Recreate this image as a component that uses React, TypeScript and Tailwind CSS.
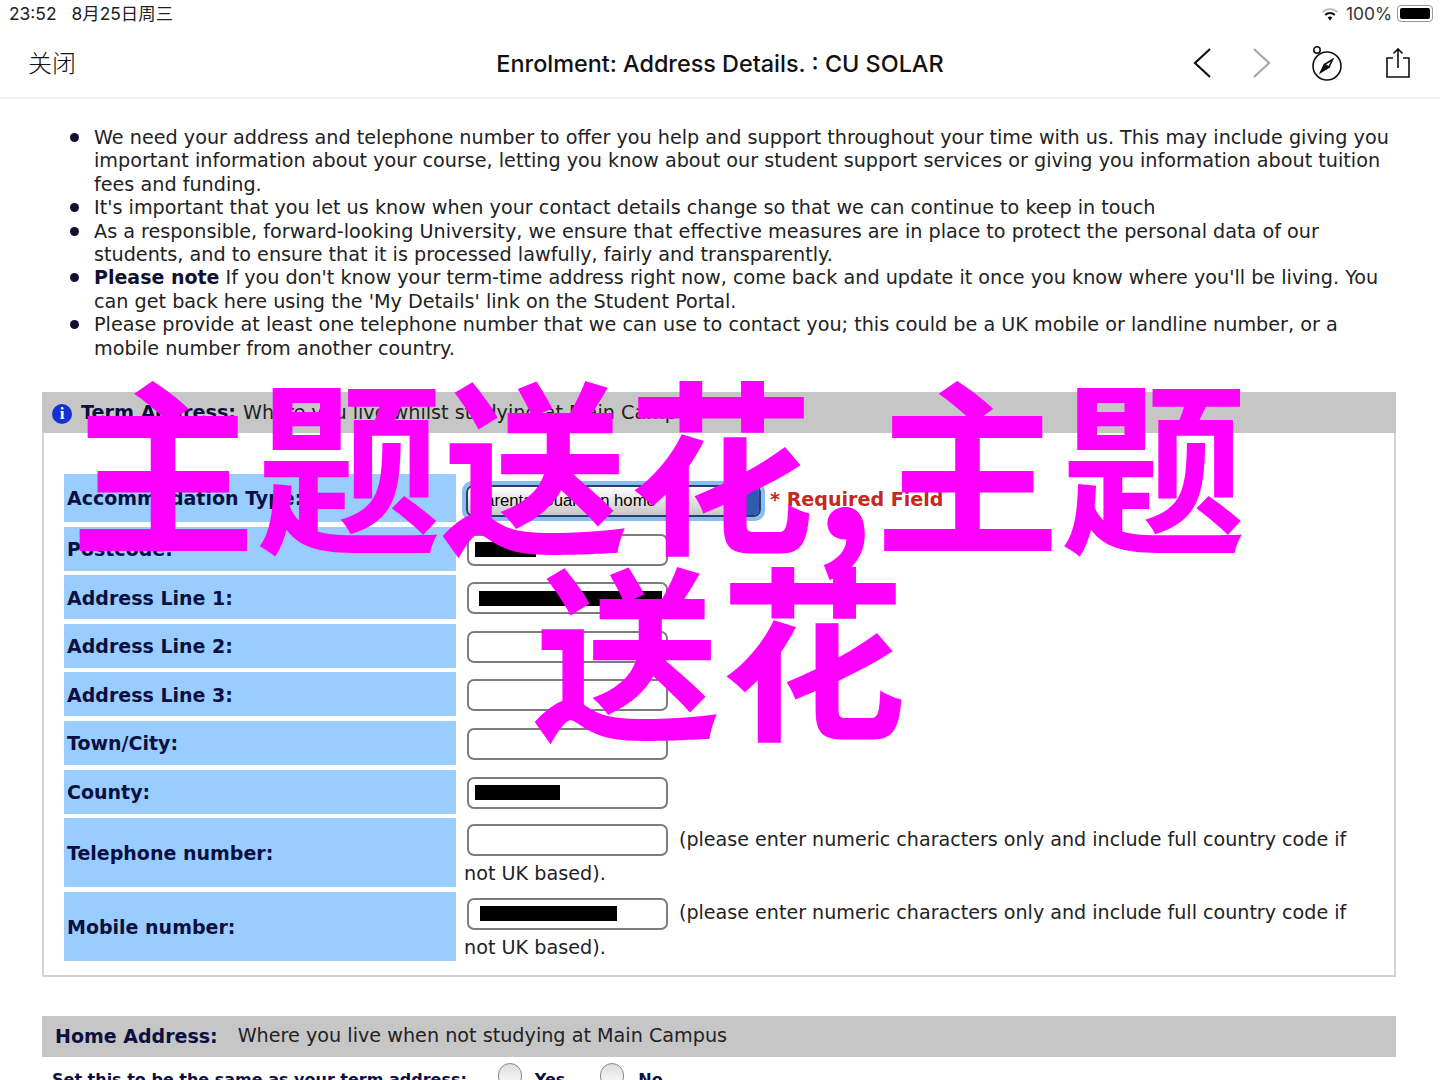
const bullets = [
  <>We need your address and telephone number to offer you help and support throughout your time with us. This may include giving you important information about your course, letting you know about our student support services or giving you information about tuition fees and funding.</>,
  <>It's important that you let us know when your contact details change so that we can continue to keep in touch</>,
  <>As a responsible, forward-looking University, we ensure that effective measures are in place to protect the personal data of our students, and to ensure that it is processed lawfully, fairly and transparently.</>,
  <><b className="text-[19px] text-[#101030]">Please note</b> If you don't know your term-time address right now, come back and update it once you know where you'll be living. You can get back here using the 'My Details' link on the Student Portal.</>,
  <>Please provide at least one telephone number that we can use to contact you; this could be a UK mobile or landline number, or a mobile number from another country.</>,
];

function NavIcons() {
  return (
    <div className="flex items-center pr-[29px]">
      <svg width="24" height="34" viewBox="0 0 24 34" fill="none" stroke="#111" strokeWidth="2.2">
        <path d="M19 3 4 17l15 14" />
      </svg>
      <svg className="ml-[34px]" width="24" height="34" viewBox="0 0 24 34" fill="none" stroke="#a8a8a8" strokeWidth="2.2">
        <path d="M5 3l15 14L5 31" />
      </svg>
      <svg className="ml-[36px]" width="34" height="36" viewBox="0 0 34 36" fill="none" stroke="#111" strokeWidth="1.6">
        <circle cx="18" cy="21" r="14" />
        <circle cx="8" cy="5" r="3.2" />
        <path d="M23.5 14.5 15.5 19.5 12 27l8-5z" />
        <path d="M15.5 19.5 20 22 12 27z" fill="#111" />
      </svg>
      <svg className="ml-[42px]" width="26" height="32" viewBox="0 0 26 32" fill="none" stroke="#111" strokeWidth="1.6">
        <path d="M8 11H2v19h22V11h-6" />
        <path d="M13 21V2M8.5 6.5 13 2l4.5 4.5" />
      </svg>
    </div>
  );
}

function Field({ mark }: { mark?: string }) {
  return (
    <div className="flex h-[32px] w-[201px] shrink-0 items-center rounded-[7px] border-2 border-[#7d7d7d] bg-white">
      {mark && <div className={mark} />}
    </div>
  );
}

function Row({ label, height, children }: { label: string; height: string; children: React.ReactNode }) {
  return (
    <div className={`flex ${height}`}>
      <div className="flex w-[392px] shrink-0 items-center bg-[#99ccff] pl-[3px] pt-[1px] text-[19px] font-bold text-[#0c1040]">{label}</div>
      <div className="min-w-0 flex-1 pl-[8px]">{children}</div>
    </div>
  );
}

function PhoneRow({ label, mark }: { label: string; mark?: string }) {
  return (
    <Row label={label} height="h-[69px]">
      <div className="flex h-[42px] items-center pl-[3px] pt-[2px]">
        <Field mark={mark} />
        <span className="ml-[11px] whitespace-nowrap text-[19.1px]">(please enter numeric characters only and include full country code if</span>
      </div>
      <div className="leading-[27px]">not UK based).</div>
    </Row>
  );
}

function SimpleRow({ label, mark }: { label: string; mark?: string }) {
  return (
    <Row label={label} height="h-[44px]">
      <div className="flex h-full items-center pl-[3px] pt-[2px]">
        <Field mark={mark} />
      </div>
    </Row>
  );
}

export default function App() {
  return (
    <div className="relative h-[1080px] w-[1440px] overflow-hidden bg-white font-['DejaVu_Sans','Noto_Sans_CJK_SC',sans-serif] text-[19.2px] text-[#222]">
      {/* status bar */}
      <div className="flex h-[28px] items-center justify-between pl-[9px] pr-[7px] font-['Inter','Noto_Sans_CJK_SC',sans-serif] text-[17.4px] text-[#222]">
        <div className="flex gap-[15px]">
          <span>23:52</span>
          <span>8月25日周三</span>
        </div>
        <div className="flex items-center gap-[5px]">
          <svg className="mr-[2px]" width="18" height="14" viewBox="0 0 18 14" fill="none" stroke="#111" strokeWidth="1.8">
            <path d="M1.5 5.2a10.5 10.5 0 0 1 15 0" stroke="#bbb" />
            <path d="M4.2 8a6.8 6.8 0 0 1 9.6 0" />
            <path d="M9 13.5 6.6 10.6a3.4 3.4 0 0 1 4.8 0z" fill="#111" stroke="none" />
          </svg>
          <span className="text-[#333]">100%</span>
          <div className="flex h-[17px] w-[36px] items-center rounded-[4px] border border-[#999] p-[2px]">
            <div className="h-full w-full rounded-[2px] bg-black" />
          </div>
        </div>
      </div>

      {/* nav bar */}
      <div className="flex h-[71px] items-center justify-between border-b-2 border-[#f3f3f3]">
        <span className="-mt-[2px] pl-[28px] font-['Noto_Sans_CJK_SC',sans-serif] text-[24px] font-light text-[#111]">关闭</span>
        <NavIcons />
      </div>
      <div className="absolute left-0 right-0 top-[47px] text-center font-['Inter',sans-serif] text-[23.4px] font-medium leading-[34px] text-[#111]">
        Enrolment: Address Details. : CU SOLAR
      </div>

      {/* bullet list */}
      <ul className="mt-[27px] pl-[70px] pr-[42px] leading-[23.4px]">
        {bullets.map((b, i) => (
          <li key={i} className="flex">
            <span className="mr-[15px] mt-[7px] h-[9px] w-[9px] shrink-0 rounded-full bg-[#101030]" />
            <span>{b}</span>
          </li>
        ))}
      </ul>

      {/* term address panel */}
      <div className="ml-[42px] mr-[44px] mt-[32px] border-2 border-t-0 border-[#d4d4d4]">
        <div className="-mx-[2px] flex h-[41px] items-center bg-[#c6c6c6] pl-[10px] pt-[2px]">
          <span className="flex h-[20px] w-[20px] items-center justify-center rounded-full bg-[#1432d2] font-['Liberation_Serif',serif] text-[17px] font-bold text-white">i</span>
          <b className="ml-[9px] text-[19.2px] text-[#0c1040]">Term Address:</b>
          <span className="ml-[7px]">Where you live whilst studying at Main Campus</span>
        </div>
        <div className="flex flex-col gap-[4.6px] pb-[14px] pl-[20px] pt-[41px]">
          <Row label="Accommodation Type:" height="h-[48px]">
            <div className="-ml-[2px] flex h-full items-center pt-[5px]">
              <div className="flex h-[40px] w-[303px] items-center rounded-[10px] border-[4px] border-[#8abcf0]">
                <div className="flex h-full flex-1 items-center justify-between rounded-[7px] border-2 border-[#26406f] bg-gradient-to-b from-white to-[#c8c8c8] pl-[6px] font-['Liberation_Sans',sans-serif] text-[16.7px] text-black">
                  <span>Parental/Guardian home</span>
                  <div className="h-full w-[16px] rounded-r-[5px] bg-[#2f5cae]" />
                </div>
              </div>
              <span className="ml-[5px] text-[19.1px] font-bold text-[#c22a22]">* Required Field</span>
            </div>
          </Row>
          <SimpleRow label="Postcode:" mark="ml-[6px] h-[15px] w-[61px] bg-black" />
          <SimpleRow label="Address Line 1:" mark="ml-[10px] h-[15px] w-[183px] bg-black" />
          <SimpleRow label="Address Line 2:" />
          <SimpleRow label="Address Line 3:" />
          <SimpleRow label="Town/City:" />
          <SimpleRow label="County:" mark="ml-[6px] h-[15px] w-[85px] bg-black" />
          <PhoneRow label="Telephone number:" />
          <PhoneRow label="Mobile number:" mark="ml-[11px] h-[15px] w-[137px] bg-black" />
        </div>
      </div>

      {/* home address panel */}
      <div className="ml-[42px] mr-[44px] mt-[39px]">
        <div className="flex h-[41px] items-center bg-[#c6c6c6] pl-[13px]">
          <b className="text-[19px] text-[#0c1040]">Home Address:</b>
          <span className="ml-[20px]">Where you live when not studying at Main Campus</span>
        </div>
        <div className="flex h-[44px] items-start pl-[10px] pt-[11px] text-[16px] font-bold text-[#0c1040]">
          <span>Set this to be the same as your term address:</span>
          <span className="ml-[31px] h-[26px] w-[24px] shrink-0 -translate-y-[5px] rounded-full border border-[#888] bg-gradient-to-b from-[#ddd] to-white" />
          <span className="ml-[13px]">Yes</span>
          <span className="ml-[35px] h-[26px] w-[24px] shrink-0 -translate-y-[5px] rounded-full border border-[#888] bg-gradient-to-b from-[#ddd] to-white" />
          <span className="ml-[14px]">No</span>
        </div>
      </div>

      {/* watermark over the page */}
      <div className="pointer-events-none absolute left-0 top-[366px] w-full font-['Noto_Sans_CJK_SC',sans-serif] text-[186px] font-bold leading-[186px] text-[#ff00ff]">
        <div className="whitespace-nowrap pl-[70px]">主题送花,主题</div>
        <div className="text-center">送花</div>
      </div>
    </div>
  );
}
